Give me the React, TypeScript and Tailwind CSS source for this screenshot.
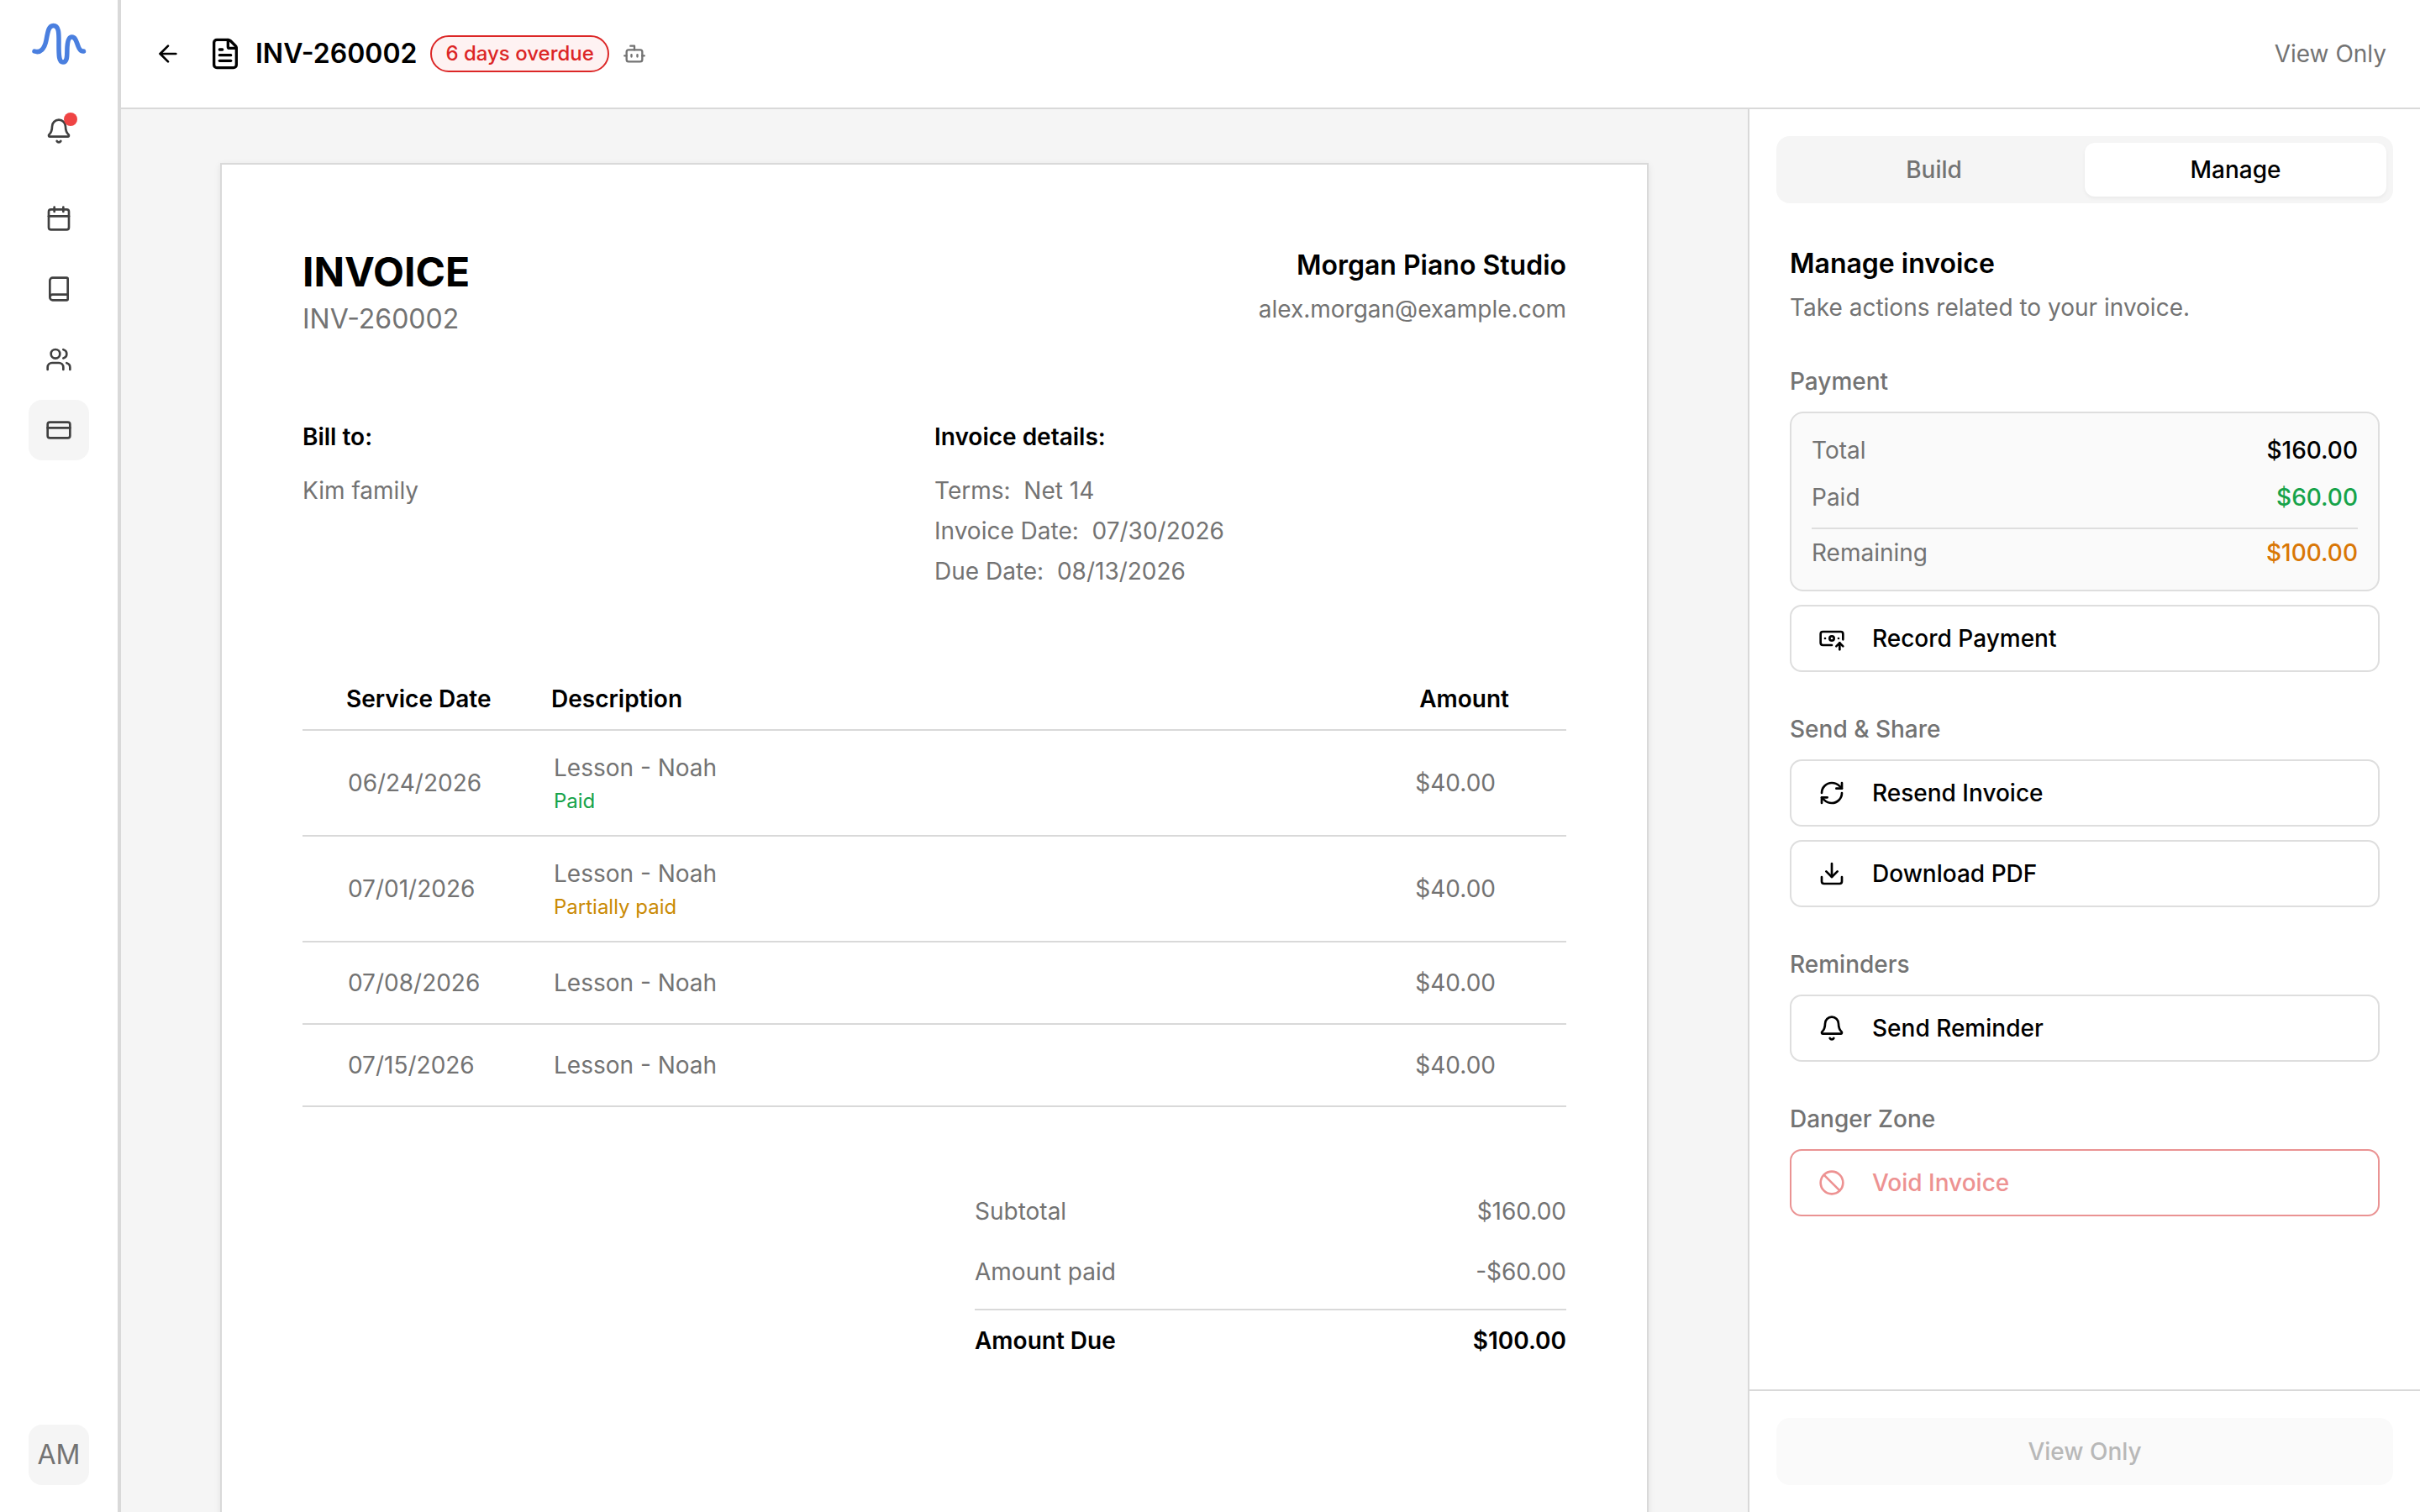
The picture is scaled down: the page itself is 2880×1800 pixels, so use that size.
import { ArrowLeft, Ban, BanknoteArrowUp, Bell, Book, Bot, Calendar, CreditCard, Download, FileText, RefreshCw, Users } from "lucide-react";
import type { ReactNode } from "react";

const lineItems = [
  { date: "06/24/2026", status: "Paid", statusClass: "text-[#16a34a]", rowClass: "h-[126px]" },
  { date: "07/01/2026", status: "Partially paid", statusClass: "text-[#ca8a04]", rowClass: "h-[126px]" },
  { date: "07/08/2026", rowClass: "h-[98px]" },
  { date: "07/15/2026", rowClass: "h-[98px]" },
];

function NavIcon({ children, active }: { children: ReactNode; active?: boolean }) {
  return (
    <div className={`flex h-[72px] w-[72px] items-center justify-center rounded-[16px] text-[#404040] ${active ? "bg-[#f5f5f5]" : ""}`}>
      {children}
    </div>
  );
}

function Sidebar() {
  return (
    <aside className="flex h-full w-[144px] shrink-0 flex-col items-center border-r-4 border-[#d9d9d9] bg-white pb-[32px]">
      <svg className="mt-[24px]" width="72" height="56" viewBox="0 0 72 56" fill="none">
        <path
          d="M7 37C14 39.5 19 34 21 24C23 13 24 6.5 29.5 6.5C37 6.5 36 18 36 30C36 42 36 50 41 50C47 50 45.5 40 46 32C46.5 24 48 20 51.5 20C56 20 57 26 59 31C60.5 35 63 37.5 65.5 37"
          stroke="#4a7fdf"
          strokeWidth="5.5"
          strokeLinecap="round"
          strokeLinejoin="round"
        />
      </svg>
      <div className="relative mt-[40px]">
        <NavIcon>
          <Bell size={32} strokeWidth={2} />
        </NavIcon>
        <span className="absolute left-[42px] top-[14px] h-[16px] w-[16px] rounded-full bg-[#ef4444]" />
      </div>
      <div className="mt-[32px] flex flex-col gap-[12px]">
        <NavIcon>
          <Calendar size={32} strokeWidth={2} />
        </NavIcon>
        <NavIcon>
          <Book size={32} strokeWidth={2} />
        </NavIcon>
        <NavIcon>
          <Users size={32} strokeWidth={2} />
        </NavIcon>
        <NavIcon active>
          <CreditCard size={32} strokeWidth={2} />
        </NavIcon>
      </div>
      <div className="mt-auto flex h-[72px] w-[72px] items-center justify-center rounded-[16px] bg-[#f5f5f5] text-[32px] text-[#737373]">
        AM
      </div>
    </aside>
  );
}

function TopBar() {
  return (
    <header className="flex h-[130px] shrink-0 items-center border-b-2 border-[#d9d9d9] bg-white pl-[40px] pr-[40px]">
      <ArrowLeft size={32} strokeWidth={2} className="text-black" />
      <FileText size={40} strokeWidth={2} className="ml-[32px] text-black" />
      <h1 className="ml-[16px] text-[32px] font-semibold leading-[48px] text-black">INV-260002</h1>
      <span className="ml-[16px] flex h-[44px] items-center rounded-full border-2 border-[#dc2626] bg-[#fef2f2] px-[16px] text-[24px] font-medium text-[#dc2626]">
        6 days overdue
      </span>
      <Bot size={28} strokeWidth={2} className="ml-[16px] text-[#737373]" />
      <span className="ml-auto text-[28px] text-[#737373]">View Only</span>
    </header>
  );
}

function InvoicePaper() {
  return (
    <div className="mx-auto mt-[64px] min-h-[2200px] w-[1700px] border-2 border-[#d9d9d9] bg-white px-[96px] pt-[96px] shadow-[0_2px_8px_rgba(0,0,0,0.08)]">
      <div className="flex items-start justify-between">
        <div>
          <div className="text-[48px] font-bold leading-[64px] text-black">INVOICE</div>
          <div className="mt-[2px] text-[32px] leading-[44px] text-[#737373]">INV-260002</div>
        </div>
        <div className="text-right">
          <div className="text-[32px] font-semibold leading-[48px] text-black">Morgan Piano Studio</div>
          <div className="mt-[8px] text-[28px] leading-[40px] text-[#737373]">alex.morgan@example.com</div>
        </div>
      </div>

      <div className="mt-[98px] grid grid-cols-2 text-[28px] leading-[40px]">
        <div>
          <div className="font-semibold text-black">Bill to:</div>
          <div className="mt-[24px] text-[#737373]">Kim family</div>
        </div>
        <div>
          <div className="font-semibold text-black">Invoice details:</div>
          <div className="mt-[24px] flex flex-col gap-[8px] whitespace-pre text-[#737373]">
            <div>Terms:  Net 14</div>
            <div>Invoice Date:  07/30/2026</div>
            <div>Due Date:  08/13/2026</div>
          </div>
        </div>
      </div>

      <div className="mt-[112px] text-[28px] leading-[40px]">
        <div className="flex border-b-2 border-[#d9d9d9] pb-[16px] font-semibold text-black">
          <div className="w-[296px] pl-[52px]">Service Date</div>
          <div className="flex-1">Description</div>
          <div className="pr-[68px]">Amount</div>
        </div>
        {lineItems.map((item) => (
          <div key={item.date} className={`flex items-center border-b-2 border-[#d9d9d9] text-[#737373] ${item.rowClass}`}>
            <div className="w-[299px] pl-[54px]">{item.date}</div>
            <div className="flex-1">
              <div>Lesson - Noah</div>
              {item.status && <div className={`mt-[4px] text-[24px] leading-[32px] ${item.statusClass}`}>{item.status}</div>}
            </div>
            <div className="pr-[84px]">$40.00</div>
          </div>
        ))}
      </div>

      <div className="ml-auto mt-[104px] w-[704px] text-[28px] leading-[40px]">
        <div className="flex justify-between text-[#737373]">
          <span>Subtotal</span>
          <span>$160.00</span>
        </div>
        <div className="mt-[32px] flex justify-between border-b-2 border-[#d9d9d9] pb-[24px] text-[#737373]">
          <span>Amount paid</span>
          <span>-$60.00</span>
        </div>
        <div className="mt-[16px] flex justify-between font-semibold text-black">
          <span>Amount Due</span>
          <span>$100.00</span>
        </div>
      </div>
    </div>
  );
}

function ActionButton({ icon, label, danger }: { icon: ReactNode; label: string; danger?: boolean }) {
  return (
    <button
      className={`flex h-[80px] w-full items-center gap-[32px] rounded-[14px] border-2 bg-white pl-[32px] text-[28px] font-medium ${
        danger ? "border-[#ea9393] text-[#ed9292]" : "border-[#dedede] text-black"
      }`}
    >
      {icon}
      {label}
    </button>
  );
}

function SectionLabel({ children }: { children: ReactNode }) {
  return <div className="text-[28px] font-medium leading-[40px] text-[#737373]">{children}</div>;
}

function ManagePanel() {
  return (
    <aside className="flex h-full w-[800px] shrink-0 flex-col border-l-2 border-[#d9d9d9] bg-white">
      <div className="flex-1 px-[32px] pt-[32px]">
        <div className="grid h-[80px] grid-cols-2 rounded-[16px] bg-[#f5f5f5] p-[8px] text-[28px] font-medium">
          <div className="flex items-center justify-center text-[#737373]">Build</div>
          <div className="flex items-center justify-center rounded-[12px] bg-white text-black shadow-[0_2px_4px_rgba(0,0,0,0.05)]">Manage</div>
        </div>

        <div className="px-[16px]">
          <h2 className="mt-[48px] text-[32px] font-semibold leading-[48px] text-black">Manage invoice</h2>
          <p className="mt-[8px] text-[28px] leading-[40px] text-[#737373]">Take actions related to your invoice.</p>

          <div className="mt-[48px]">
            <SectionLabel>Payment</SectionLabel>
            <div className="mt-[16px] rounded-[16px] border-2 border-[#dedede] bg-[#fafafa] px-[24px] py-[24px] text-[28px] leading-[40px]">
              <div className="flex justify-between">
                <span className="text-[#737373]">Total</span>
                <span className="font-medium text-black">$160.00</span>
              </div>
              <div className="mt-[16px] flex justify-between border-b-2 border-[#dedede] pb-[16px]">
                <span className="text-[#737373]">Paid</span>
                <span className="font-medium text-[#16a34a]">$60.00</span>
              </div>
              <div className="mt-[8px] flex justify-between">
                <span className="text-[#737373]">Remaining</span>
                <span className="font-medium text-[#d97706]">$100.00</span>
              </div>
            </div>
            <div className="mt-[16px]">
              <ActionButton icon={<BanknoteArrowUp size={32} strokeWidth={2} />} label="Record Payment" />
            </div>
          </div>

          <div className="mt-[48px]">
            <SectionLabel>Send &amp; Share</SectionLabel>
            <div className="mt-[16px] flex flex-col gap-[16px]">
              <ActionButton icon={<RefreshCw size={32} strokeWidth={2} />} label="Resend Invoice" />
              <ActionButton icon={<Download size={32} strokeWidth={2} />} label="Download PDF" />
            </div>
          </div>

          <div className="mt-[48px]">
            <SectionLabel>Reminders</SectionLabel>
            <div className="mt-[16px]">
              <ActionButton icon={<Bell size={32} strokeWidth={2} />} label="Send Reminder" />
            </div>
          </div>

          <div className="mt-[48px]">
            <SectionLabel>Danger Zone</SectionLabel>
            <div className="mt-[16px]">
              <ActionButton icon={<Ban size={32} strokeWidth={2} />} label="Void Invoice" danger />
            </div>
          </div>
        </div>
      </div>

      <div className="border-t-2 border-[#d9d9d9] p-[32px]">
        <div className="flex h-[80px] items-center justify-center rounded-[16px] bg-[#fafafa] text-[28px] font-medium text-[#b8b8b8]">
          View Only
        </div>
      </div>
    </aside>
  );
}

export default function App() {
  return (
    <div className="flex h-[1800px] w-[2880px] overflow-hidden bg-white font-['Inter',sans-serif] antialiased">
      <Sidebar />
      <div className="flex h-full min-w-0 flex-1 flex-col">
        <TopBar />
        <div className="flex min-h-0 flex-1">
          <main className="min-w-0 flex-1 overflow-hidden bg-[#f5f5f5]">
            <InvoicePaper />
          </main>
          <ManagePanel />
        </div>
      </div>
    </div>
  );
}
